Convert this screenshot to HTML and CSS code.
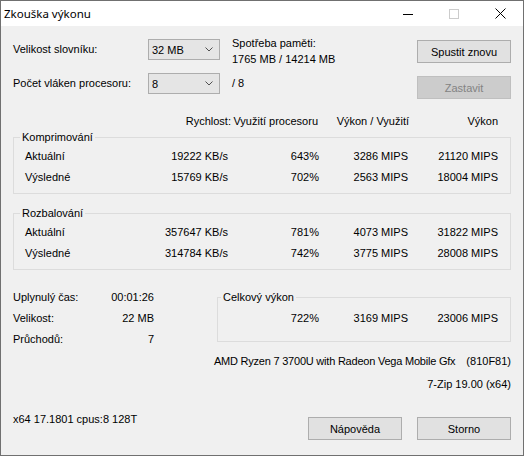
FILE: index.html
```html
<!DOCTYPE html>
<html lang="cs">
<head>
<meta charset="utf-8">
<title>Zkouška výkonu</title>
<link rel="stylesheet" href="styles.css">
</head>
<body>
<div class="window">
  <div class="titlebar">
    <span class="title">Zkouška výkonu</span>
    <div class="caps">
      <span class="cap"><svg width="10" height="10" viewBox="0 0 10 10"><path d="M0 5.5H10" stroke="#000" stroke-width="1"/></svg></span>
      <span class="cap"><svg width="10" height="10" viewBox="0 0 10 10"><rect x="0.5" y="0.5" width="9" height="9" fill="none" stroke="#cccccc" stroke-width="1"/></svg></span>
      <span class="cap"><svg width="11" height="11" viewBox="0 0 11 11"><path d="M0.5 0.5L10.5 10.5M10.5 0.5L0.5 10.5" stroke="#000" stroke-width="1"/></svg></span>
    </div>
  </div>
  <div class="client">
    <div class="top">
      <div class="settings">
        <span class="lbl">Velikost slovníku:</span>
        <div class="combo"><span>32 MB</span><svg width="8" height="5" viewBox="0 0 8 5"><path d="M0.5 0.5L4 4L7.5 0.5" fill="none" stroke="#505050" stroke-width="1"/></svg></div>
        <span class="lbl">Počet vláken procesoru:</span>
        <div class="combo"><span>8</span><svg width="8" height="5" viewBox="0 0 8 5"><path d="M0.5 0.5L4 4L7.5 0.5" fill="none" stroke="#505050" stroke-width="1"/></svg></div>
      </div>
      <div class="mem">
        <span class="mline">Spotřeba paměti:</span>
        <span class="mline">1765 MB / 14214 MB</span>
        <span class="mline threads">/ 8</span>
      </div>
      <div class="actions">
        <button class="btn">Spustit znovu</button>
        <button class="btn" disabled>Zastavit</button>
      </div>
    </div>

    <div class="hdr">
      <span>Rychlost:</span>
      <span>Využití procesoru</span>
      <span>Výkon / Využití</span>
      <span>Výkon</span>
    </div>

    <fieldset class="grp">
      <legend>Komprimování</legend>
      <div class="rows">
        <span class="rl">Aktuální</span><span>19222 KB/s</span><span>643%</span><span>3286 MIPS</span><span>21120 MIPS</span>
        <span class="rl">Výsledné</span><span>15769 KB/s</span><span>702%</span><span>2563 MIPS</span><span>18004 MIPS</span>
      </div>
    </fieldset>

    <fieldset class="grp grp2">
      <legend>Rozbalování</legend>
      <div class="rows">
        <span class="rl">Aktuální</span><span>357647 KB/s</span><span>781%</span><span>4073 MIPS</span><span>31822 MIPS</span>
        <span class="rl">Výsledné</span><span>314784 KB/s</span><span>742%</span><span>3775 MIPS</span><span>28008 MIPS</span>
      </div>
    </fieldset>

    <div class="bottom">
      <div class="info">
        <span>Uplynulý čas:</span><span class="iv">00:01:26</span>
        <span>Velikost:</span><span class="iv">22 MB</span>
        <span>Průchodů:</span><span class="iv">7</span>
      </div>
      <div class="summary">
        <fieldset class="total">
          <legend>Celkový výkon</legend>
          <div class="trow"><span>722%</span><span>3169 MIPS</span><span>23006 MIPS</span></div>
        </fieldset>
        <div class="cpu"><span class="cpuname">AMD Ryzen 7 3700U with Radeon Vega Mobile Gfx</span><span>(810F81)</span></div>
        <div class="ver">7-Zip 19.00 (x64)</div>
      </div>
    </div>

    <div class="footer">
      <span class="sys">x64 17.1801 cpus:8 128T</span>
      <div class="fbtns">
        <button class="btn">Nápověda</button>
        <button class="btn">Storno</button>
      </div>
    </div>
  </div>
</div>
</body>
</html>
```

FILE: styles.css
```css
html, body {
  margin: 0;
  padding: 0;
  background: #ffffff;
}

body {
  font-family: "Liberation Sans", Arial, sans-serif;
  font-size: 11px;
  color: #000000;
}

.window {
  width: 524px;
  height: 456px;
  box-sizing: border-box;
  border: 1px solid #707070;
  background: #f0f0f0;
  display: flex;
  flex-direction: column;
}

.titlebar {
  height: 25px;
  flex: none;
  background: #ffffff;
  display: flex;
  align-items: center;
}

.title {
  font-family: "Noto Sans", "Open Sans", sans-serif;
  font-size: 11.5px;
  padding-left: 3px;
  line-height: 25px;
  flex: 1;
}

.caps {
  display: flex;
  height: 25px;
}

.cap {
  width: 46px;
  height: 25px;
  display: flex;
  align-items: center;
  justify-content: center;
}

.client {
  flex: 1;
  padding: 13px 12px 0 12px;
  display: flex;
  flex-direction: column;
}

/* top area */
.top {
  display: flex;
  align-items: flex-start;
}

.settings {
  display: grid;
  grid-template-columns: 135px 72px;
  grid-auto-rows: 21px;
  row-gap: 13px;
  align-items: center;
}

.lbl {
  line-height: 16px;
  margin-top: -2px;
}

.combo {
  height: 21px;
  box-sizing: border-box;
  border: 1px solid #adadad;
  background: #e5e5e5;
  display: flex;
  align-items: center;
  justify-content: space-between;
  padding: 0 6px 0 3px;
}

.combo span {
  line-height: 16px;
}

.mem {
  display: flex;
  flex-direction: column;
  margin-left: 12px;
  margin-top: -4px;
}

.mline {
  line-height: 16px;
}

.threads {
  margin-top: 8px;
}

.actions {
  margin-left: auto;
  display: flex;
  flex-direction: column;
  gap: 13px;
  margin-top: 1px;
}

.btn {
  width: 94px;
  height: 23px;
  box-sizing: border-box;
  border: 1px solid #adadad;
  background: #e1e1e1;
  font-family: "Liberation Sans", Arial, sans-serif;
  font-size: 11px;
  color: #000000;
  padding: 0;
  margin: 0;
}

.btn:disabled {
  background: #cccccc;
  border-color: #bfbfbf;
  color: #838383;
}

/* header */
.hdr {
  display: grid;
  grid-template-columns: 218px 87px 91px 89px;
  margin-top: 14px;
  line-height: 16px;
}

.hdr span {
  display: flex;
  justify-content: flex-end;
  white-space: nowrap;
}

/* group boxes */
.grp {
  margin: 1px 0 0 0;
  border: 1px solid #dcdcdc;
  padding: 1px 12px 5px 6px;
  min-width: 0;
}

.grp2 {
  margin-top: 12px;
}

legend {
  padding: 0 2px;
  line-height: 15px;
}

.rows {
  display: grid;
  grid-template-columns: 80px 128px 91px 89px 90px;
  grid-auto-rows: 21px;
  line-height: 21px;
}

.rows span {
  text-align: right;
  white-space: nowrap;
}

.rows .rl {
  text-align: left;
  padding-left: 5px;
}

/* bottom */
.bottom {
  display: flex;
  margin-top: 17px;
}

.info {
  display: grid;
  grid-template-columns: 80px 61px;
  grid-auto-rows: 21px;
  line-height: 21px;
  align-content: start;
}

.iv {
  text-align: right;
}

.summary {
  margin-left: auto;
  width: 296px;
  display: flex;
  flex-direction: column;
}

.total {
  margin: 3px 0 0 2px;
  border: 1px solid #dcdcdc;
  padding: 3px 12px 12px 3px;
  min-width: 0;
}

.trow {
  display: grid;
  grid-template-columns: 98px 89px 90px;
  line-height: 21px;
}

.trow span {
  text-align: right;
}

.cpu {
  display: flex;
  justify-content: flex-end;
  gap: 11px;
  line-height: 16px;
  margin-top: 11px;
  white-space: nowrap;
}

.cpuname {
  letter-spacing: -0.22px;
}

.ver {
  text-align: right;
  line-height: 16px;
  margin-top: 7px;
}

/* footer */
.footer {
  display: flex;
  align-items: flex-start;
  margin-top: 19px;
}

.sys {
  line-height: 17px;
}

.fbtns {
  margin-left: auto;
  display: flex;
  gap: 15px;
  margin-top: 6px;
}
```
